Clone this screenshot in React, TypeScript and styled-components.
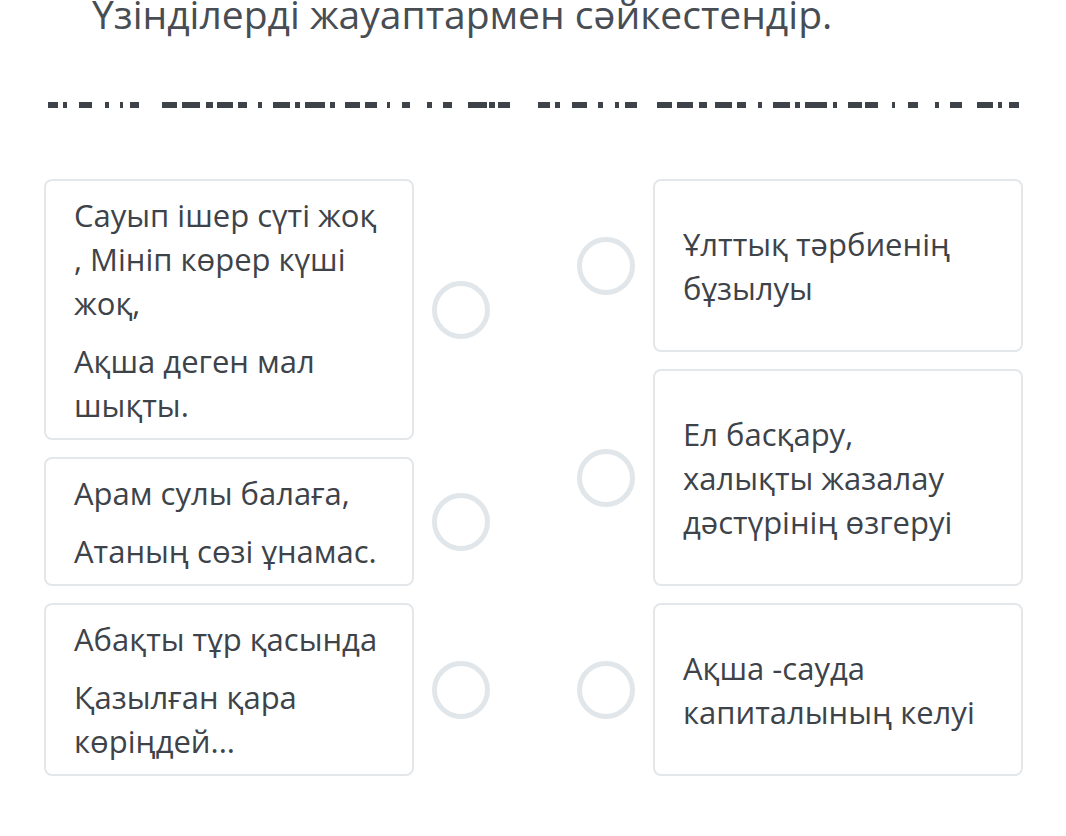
import React from "react";
import styled, { createGlobalStyle } from "styled-components";

const GlobalStyle = createGlobalStyle`
  html, body {
    margin: 0;
    padding: 0;
    background: #ffffff;
  }
  body {
    font-family: "Open Sans", "Noto Sans", sans-serif;
    color: #3f454b;
  }
`;

type Item = { lines: string[][] };

const leftItems: Item[] = [
  { lines: [["Сауып ішер сүті жоқ", ", Мініп көрер күші", "жоқ,"], ["Ақша деген мал", "шықты."]] },
  { lines: [["Арам сулы балаға,"], ["Атаның сөзі ұнамас."]] },
  { lines: [["Абақты тұр қасында"], ["Қазылған қара", "көріңдей..."]] },
];

const rightItems: Item[] = [
  { lines: [["Ұлттық тәрбиенің", "бұзылуы"]] },
  { lines: [["Ел басқару,", "халықты жазалау", "дәстүрінің өзгеруі"]] },
  { lines: [["Ақша -сауда", "капиталының келуі"]] },
];

// segments of the clipped marker strip: [x, width]
const strip: [number, number][] = [
  [48, 10], [63, 4], [79, 13], [105, 4], [120, 3], [130, 9],
  [162, 15], [182, 18], [206, 7], [217, 16], [238, 9], [258, 4], [273, 17],
  [295, 5], [305, 20], [330, 5], [345, 15], [365, 12], [387, 3], [402, 8],
  [427, 5], [443, 9], [468, 19], [489, 6], [498, 12],
  [538, 12], [555, 5], [572, 15], [598, 5], [615, 4], [625, 12],
  [657, 15], [677, 16], [699, 8], [715, 17], [737, 9], [758, 4], [773, 17],
  [795, 5], [805, 22], [833, 4], [848, 14], [865, 13], [892, 3], [908, 10],
  [935, 4], [950, 12], [977, 16], [998, 4], [1009, 10],
];

function App() {
  return (
    <Page>
      <GlobalStyle />
      <Title>Үзінділерді жауаптармен сәйкестендір.</Title>
      <Strip width="1066" height="8" viewBox="0 0 1066 8">
        {strip.map(([x, w], i) => (
          <rect key={i} x={x} y={1} width={w} height={6} fill="#3d4349" />
        ))}
      </Strip>
      <Board>
        <Column>
          {leftItems.map((item, i) => (
            <Row key={i}>
              <Card side="left">
                {item.lines.map((para, j) => (
                  <Para key={j}>
                    {para.map((l, k) => (
                      <Line key={k}>{l}</Line>
                    ))}
                  </Para>
                ))}
              </Card>
              <Radio />
            </Row>
          ))}
        </Column>
        <Column>
          {rightItems.map((item, i) => (
            <Row key={i}>
              <Radio />
              <Card side="right">
                {item.lines.map((para, j) => (
                  <Para key={j}>
                    {para.map((l, k) => (
                      <Line key={k}>{l}</Line>
                    ))}
                  </Para>
                ))}
              </Card>
            </Row>
          ))}
        </Column>
      </Board>
    </Page>
  );
}

export default App;

const Page = styled.div`
  width: 1066px;
  height: 836px;
  overflow: hidden;
  background: #ffffff;
`;

const Title = styled.h1`
  margin: -6px 0 0;
  padding-left: 92px;
  font-family: "Open Sans", "Noto Sans", sans-serif;
  font-size: 39px;
  font-weight: 400;
  line-height: 39px;
  color: #474d53;
  white-space: nowrap;
`;

const Strip = styled.svg`
  display: block;
  margin-top: 68px;
`;

const Board = styled.div`
  display: flex;
  justify-content: space-between;
  align-items: flex-start;
  padding: 70px 43px 0 44px;
`;

const Column = styled.div`
  display: flex;
  flex-direction: column;
  gap: 17px;
`;

const Row = styled.div`
  display: flex;
  align-items: center;
  gap: 18px;
`;

const Card = styled.div<{ side: "left" | "right" }>`
  box-sizing: border-box;
  width: 370px;
  border: 2px solid #e4e7ea;
  border-radius: 8px;
  background: #ffffff;
  padding: ${(p) => (p.side === "left" ? "12px 26px 11px 28px" : "41px 26px 40px 28px")};
  display: flex;
  flex-direction: column;
  gap: 14px;
`;

const Para = styled.div`
  display: flex;
  flex-direction: column;
`;

const Line = styled.div`
  font-size: 31px;
  line-height: 44px;
  color: #3d4349;
  white-space: nowrap;
`;

const Radio = styled.div`
  box-sizing: border-box;
  width: 58px;
  height: 58px;
  flex: none;
  border-radius: 50%;
  border: 5px solid #e1e6ea;
`;
